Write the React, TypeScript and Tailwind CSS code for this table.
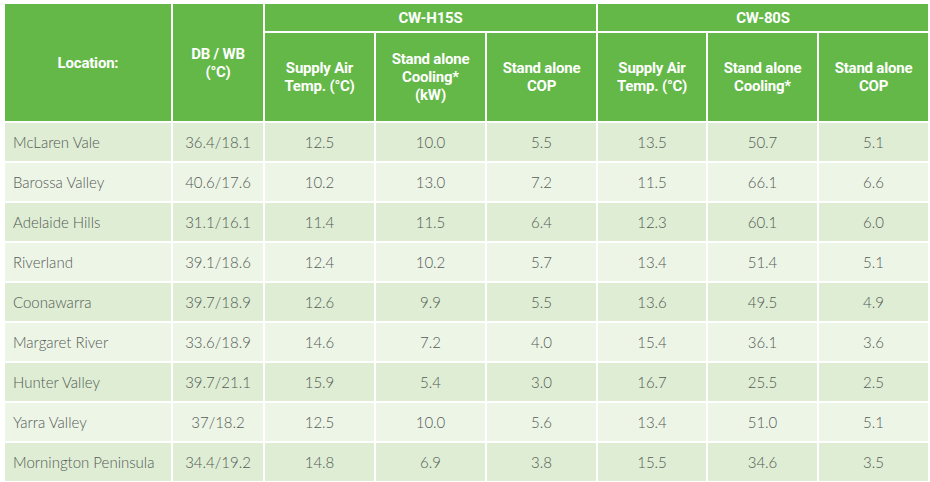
import React from "react";

type Row = [string, string, string, string, string, string, string, string];

const rows: Row[] = [
  ["McLaren Vale", "36.4/18.1", "12.5", "10.0", "5.5", "13.5", "50.7", "5.1"],
  ["Barossa Valley", "40.6/17.6", "10.2", "13.0", "7.2", "11.5", "66.1", "6.6"],
  ["Adelaide Hills", "31.1/16.1", "11.4", "11.5", "6.4", "12.3", "60.1", "6.0"],
  ["Riverland", "39.1/18.6", "12.4", "10.2", "5.7", "13.4", "51.4", "5.1"],
  ["Coonawarra", "39.7/18.9", "12.6", "9.9", "5.5", "13.6", "49.5", "4.9"],
  ["Margaret River", "33.6/18.9", "14.6", "7.2", "4.0", "15.4", "36.1", "3.6"],
  ["Hunter Valley", "39.7/21.1", "15.9", "5.4", "3.0", "16.7", "25.5", "2.5"],
  ["Yarra Valley", "37/18.2", "12.5", "10.0", "5.6", "13.4", "51.0", "5.1"],
  ["Mornington Peninsula", "34.4/19.2", "14.8", "6.9", "3.8", "15.5", "34.6", "3.5"],
];

// bold headings, narrow face
const head =
  "bg-[#63b847] text-white font-bold text-[15px] leading-[18px] tracking-[-0.2px] flex items-center justify-center text-center [font-family:'Roboto',sans-serif]";

export default function App() {
  return (
    <div className="w-[930px] h-[482px] bg-white pl-[5px] pt-[4px]">
      <div className="grid grid-cols-[166px_90px_109px_109px_109px_108px_109px_109px] grid-rows-[27px_88px_repeat(9,38px)] gap-[2px] w-max">
        <div className={`${head} row-span-2`}>Location:</div>
        <div className={`${head} row-span-2`}>
          DB / WB
          <br />
          (°C)
        </div>
        <div className={`${head} col-span-3`}>CW-H15S</div>
        <div className={`${head} col-span-3`}>CW-80S</div>

        <div className={head}>
          Supply Air
          <br />
          Temp. (°C)
        </div>
        <div className={head}>
          Stand alone
          <br />
          Cooling*
          <br />
          (kW)
        </div>
        <div className={head}>
          Stand alone
          <br />
          COP
        </div>
        <div className={head}>
          Supply Air
          <br />
          Temp. (°C)
        </div>
        <div className={head}>
          Stand alone
          <br />
          Cooling*
        </div>
        <div className={head}>
          Stand alone
          <br />
          COP
        </div>

        {rows.map((r, i) =>
          r.map((cell, j) => (
            <div
              key={`${i}-${j}`}
              className={`${
                i % 2 === 0 ? "bg-[#deedd4]" : "bg-[#edf5e7]"
              } text-[#555b56] text-[15px] font-light flex items-center [font-family:'Lato','Open_Sans',sans-serif] ${
                j === 0 ? "justify-start pl-[8px]" : "justify-center"
              }`}
            >
              {cell}
            </div>
          ))
        )}
      </div>
    </div>
  );
}
